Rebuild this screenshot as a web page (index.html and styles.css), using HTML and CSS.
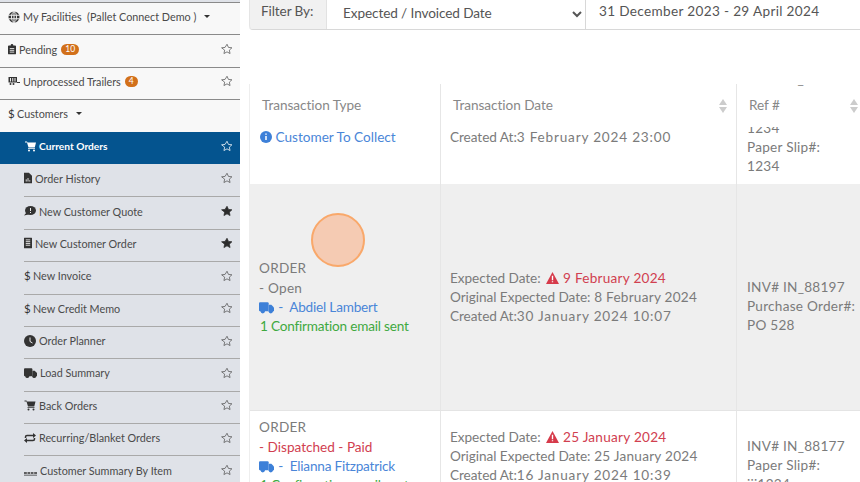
FILE: index.html
```html
<!DOCTYPE html>
<html lang="en">
<head>
<meta charset="utf-8">
<title>Current Orders</title>
<link rel="stylesheet" href="styles.css">
</head>
<body>
<svg class="sprite" aria-hidden="true">
  <symbol id="star" viewBox="0 0 24 24"><path d="M12 2.500l2.900 6.300 6.900.8-5.100 4.700 1.400 6.800-6.100-3.400-6.100 3.400 1.400-6.800L1.200 9.600l6.900-.8z"/></symbol>
  <symbol id="cart" viewBox="0 0 24 24"><path d="M1 3h4l1 2h17l-2.500 10H8L5 5H1z"/><rect x="7" y="16.500" width="14" height="1.500"/><circle cx="9" cy="21" r="2"/><circle cx="19" cy="21" r="2"/></symbol>
  <symbol id="truck" viewBox="0 0 28 24"><rect x="0" y="2" width="18" height="17" rx="2"/><path d="M18 7h5l5 5v7H18z"/><circle cx="7" cy="19" r="4"/><circle cx="22" cy="19" r="4"/></symbol>
</svg>
<div class="app">
  <nav class="side">
    <div class="row top"><svg class="ico" viewBox="0 0 24 24"><circle cx="12" cy="12" r="11"/><path d="M1 8.500h22M1 15.500h22M12 1v22M7 12c0-6 2-9 5-11 3 2 5 5 5 11s-2 9-5 11c-3-2-5-5-5-11z" class="cut"/></svg><span>My Facilities&nbsp; (Pallet Connect Demo )</span><i class="caret"></i></div>
    <div class="row top"><svg class="ico narrow" viewBox="0 0 18 24"><path d="M2 4h4a3 3 0 0 1 6 0h4a2 2 0 0 1 2 2v16a2 2 0 0 1-2 2H2a2 2 0 0 1-2-2V6a2 2 0 0 1 2-2z"/><path class="cut" d="M4 11h10M4 15h10M4 19h10"/></svg><span>Pending</span><b class="badge">10</b><svg class="star"><use href="#star"/></svg></div>
    <div class="row top"><svg class="ico" viewBox="0 0 24 18"><path d="M1 1h17v11H1z"/><path class="cut" d="M5 3v7M9.500 3v7M14 3v7"/><circle cx="5" cy="15" r="2"/><circle cx="11" cy="15" r="2"/><path d="M18 11h6v2h-6z"/></svg><span>Unprocessed Trailers</span><b class="badge">4</b><svg class="star"><use href="#star"/></svg></div>
    <div class="row top"><span class="dollar">$</span><span>Customers</span><i class="caret"></i></div>
    <div class="row active"><svg class="ico"><use href="#cart"/></svg><span>Current Orders</span><svg class="star"><use href="#star"/></svg></div>
    <div class="row sub"><svg class="ico narrow" viewBox="0 0 18 24"><path d="M0 0h11l7 7v17H0z"/><path class="cut" d="M5 20v-5M9 20v-8M13 20v-3"/></svg><span>Order History</span><svg class="star"><use href="#star"/></svg></div>
    <div class="row sub"><svg class="ico" viewBox="0 0 24 20"><ellipse cx="13" cy="9" rx="11" ry="9"/><path d="M5 13L0 19l9-2z"/><path class="cut" d="M13 4v6M13 12v2"/></svg><span>New Customer Quote</span><svg class="star on"><use href="#star"/></svg></div>
    <div class="row sub"><svg class="ico narrow" viewBox="0 0 18 24"><rect width="18" height="24" rx="1"/><path class="cut" d="M4 5h10M4 9h10M4 13h10M4 17h10"/></svg><span>New Customer Order</span><svg class="star on"><use href="#star"/></svg></div>
    <div class="row sub"><span class="dollar">$</span><span>New Invoice</span><svg class="star"><use href="#star"/></svg></div>
    <div class="row sub"><span class="dollar">$</span><span>New Credit Memo</span><svg class="star"><use href="#star"/></svg></div>
    <div class="row sub"><svg class="ico" viewBox="0 0 24 24"><circle cx="12" cy="12" r="12"/><path class="cut" d="M12 5v8l5 3"/></svg><span>Order Planner</span><svg class="star"><use href="#star"/></svg></div>
    <div class="row sub"><svg class="ico wide"><use href="#truck"/></svg><span>Load Summary</span><svg class="star"><use href="#star"/></svg></div>
    <div class="row sub"><svg class="ico"><use href="#cart"/></svg><span>Back Orders</span><svg class="star"><use href="#star"/></svg></div>
    <div class="row sub"><svg class="ico" viewBox="0 0 24 20"><path class="line" d="M3 10V8a3 3 0 0 1 3-3h14M21 10v2a3 3 0 0 1-3 3H4"/><path d="M18 0l6 5-6 5zM6 10l-6 5 6 5z"/></svg><span>Recurring/Blanket Orders</span><svg class="star"><use href="#star"/></svg></div>
    <div class="row sub"><svg class="ico wide" viewBox="0 0 28 24"><path d="M0 17h28v3H0zM0 22h28v2H0z"/><path class="cut" d="M7 17v3M14 17v3M21 17v3"/></svg><span>Customer Summary By Item</span><svg class="star"><use href="#star"/></svg></div>
  </nav>

  <main class="main">
    <div class="filter">
      <div class="filter-label">Filter By:</div>
      <select class="filter-select"><option>Expected / Invoiced Date</option></select>
      <div class="filter-date">31 December 2023 - 29 April 2024</div>
    </div>

    <div class="table">
      <div class="tr head">
        <div class="th">Transaction Type</div>
        <div class="th">Transaction Date<i class="sort"></i></div>
        <div class="th"><div class="clipline"><span>INV# IN_90300</span></div>Ref #<i class="sort"></i></div>
      </div>

      <div class="tr first">
        <div class="td"><div class="link"><svg class="info" viewBox="0 0 24 24"><circle cx="12" cy="12" r="12"/><path class="cut" d="M12 10v8M12 5v2.500"/></svg> Customer To Collect</div></div>
        <div class="td"><span class="lbl">Created At:</span><span class="when">3 February 2024 23:00</span></div>
        <div class="td ref"><div>1234</div><div>Paper Slip#:</div><div>1234</div></div>
      </div>

      <div class="tr grey">
        <div class="td mid"><div class="kind">ORDER</div><div>- Open</div><div class="link driver"><svg class="tr-ico"><use href="#truck"/></svg> - &nbsp;Abdiel Lambert</div><div class="ok">1 Confirmation email sent</div></div>
        <div class="td mid"><div><span class="lbl">Expected Date:</span> <span class="late"><svg class="warn" viewBox="0 0 24 22"><path d="M12 0l12 22H0z"/><path class="cut" d="M12 7v8M12 17v2"/></svg> 9 February 2024</span></div><div><span class="lbl">Original Expected Date:</span> 8 February 2024</div><div><span class="lbl">Created At:</span><span class="when">30 January 2024 10:07</span></div></div>
        <div class="td mid"><div class="blank"></div><div>INV# IN_88197</div><div>Purchase Order#:</div><div>PO 528</div></div>
      </div>

      <div class="tr last">
        <div class="td mid"><div class="kind">ORDER</div><div class="late status">- Dispatched - Paid</div><div class="link driver"><svg class="tr-ico"><use href="#truck"/></svg> - &nbsp;Elianna Fitzpatrick</div><div class="ok">1 Confirmation email sent</div></div>
        <div class="td mid"><div><span class="lbl">Expected Date:</span> <span class="late"><svg class="warn" viewBox="0 0 24 22"><path d="M12 0l12 22H0z"/><path class="cut" d="M12 7v8M12 17v2"/></svg> 25 January 2024</span></div><div><span class="lbl">Original Expected Date:</span> 25 January 2024</div><div><span class="lbl">Created At:</span><span class="when">16 January 2024 10:39</span></div></div>
        <div class="td mid"><div class="blank"></div><div>INV# IN_88177</div><div>Paper Slip#:</div><div>jjj1234</div></div>
      </div>
    </div>
  </main>
</div>
<div class="click-dot"></div>
</body>
</html>
```
FILE: styles.css
```css
* { box-sizing: border-box; }
html, body { margin: 0; height: 482px; overflow: hidden; background: #fff; }
body { font-family: Lato, "Noto Sans", sans-serif; position: relative; }
.sprite { display: none; }
.app { display: flex; height: 482px; overflow: hidden; }

/* sidebar */
.side { flex: 0 0 240px; height: 482px; padding-top: 2px; background: #dfe2e8; overflow: hidden; }
.row { display: flex; align-items: center; height: 32.4px; padding: 0 7px 4px 0; font-size: 10.8px; color: #4a4a4a; gap: 3px; white-space: nowrap; }
.row.top { background: #f8f8f8; padding-left: 8px; border-top: 1px solid #8a8a8a; }
.row.active { background: #04548f; color: #fff; padding-left: 24px; font-weight: 700; font-size: 10.2px; gap: 2px; }
.row.sub { margin-left: 24px; border-top: 1px solid #a9a9a9; }
.row.active + .row.sub { border-top: 0; }
.ico { width: 12px; height: 12px; flex: none; fill: currentColor; color: #333; }
.active .ico { color: #fff; width: 13px; }
.ico.narrow { width: 8px; }
.ico.wide { width: 13px; }
.ico .cut { fill: none; stroke: #eee; stroke-width: 2; }
.ico .line { fill: none; stroke: currentColor; stroke-width: 3; }
.dollar { color: #333; font-size: 11.500px; width: 6px; }
.caret { width: 0; height: 0; border: 3px solid transparent; border-top-color: #333; border-bottom: 0; margin-left: 5px; }
.badge { background: #d2701a; color: #fff; border-radius: 8px; padding: 0 4px; font-size: 8.500px; line-height: 11px; height: 11px; font-weight: 400; margin-left: 1px; }
.star { width: 12px; height: 12px; margin-left: auto; flex: none; fill: none; stroke: #555; stroke-width: 1.500; }
.star.on { fill: #2c2c2c; stroke: #2c2c2c; }
.active .star { stroke: #fff; }

/* main */
.main { flex: 1; min-width: 0; padding-left: 9px; height: 482px; overflow: hidden; color: #7b7b7b; font-size: 13.6px; letter-spacing: .25px; }
.filter { display: flex; height: 30px; border-bottom: 1px solid #d8d8d8; border-bottom-left-radius: 4px; color: #555; }
.filter-label { flex: 0 0 78px; background: #f1f1f1; padding: 3px 0 0 11px; letter-spacing: -.1px; border-right: 1px solid #e2e2e2; border-bottom-left-radius: 4px; border-left: 1px solid #e5e5e5; }
.filter-select { flex: 0 0 259px; border: 0; border-right: 1px solid #d8d8d8; background: #fff; font: inherit; letter-spacing: -.1px; color: #555; padding: 0 0 3px 12px; height: 29px; }
.filter-date { flex: 1; padding: 3px 0 0 13px; letter-spacing: .33px; }

.table { margin-top: 54px; border-left: 1px solid #eee; }
.tr { display: grid; grid-template-columns: 191px 296px 124px; }
.td, .th { border-right: 1px solid #e6e6e6; padding: 0 9px; line-height: 19px; min-width: 0; white-space: nowrap; overflow: hidden; }
.th { position: relative; height: 43px; padding: 12px 12px 0; color: #888; letter-spacing: -.05px; }
.td:nth-child(3) { padding-left: 10px; }
.clipline { position: absolute; left: 12px; top: 0; height: 2px; overflow: hidden; display: flex; align-items: flex-end; }
.clipline span { line-height: 14px; flex: none; }
.sort { position: absolute; right: 9px; top: 15px; width: 0; height: 0; border: 4px solid transparent; border-bottom: 6px solid #ccc; border-top: 0; }
.sort::after { content: ""; position: absolute; left: -4px; top: 8px; border: 4px solid transparent; border-top: 6px solid #ccc; border-bottom: 0; }
.th:nth-child(3) .sort { right: 2px; }
.first { height: 57px; }
.first .td { padding-top: 1px; }
.first .td.ref { padding-top: 0; display: flex; flex-direction: column; justify-content: flex-end; padding-bottom: 8px; }
.first .td.ref > div { flex: none; }
.first .td:first-child { padding-left: 10px; }
.grey { background: #efefef; height: 227px; border-bottom: 1px solid #e4e4e4; }
.last { height: 90px; }
.mid { display: flex; flex-direction: column; justify-content: center; }
.td.mid > * { flex: none; }
.kind { margin-bottom: 1px; }
.blank { height: 19px; }
.lbl { letter-spacing: -.05px; }
.when { letter-spacing: .8px; }
.link { color: #4a86d8; letter-spacing: 0; }
.link.driver { letter-spacing: -.2px; }
.ok { color: #3fa93f; letter-spacing: -.2px; padding-left: 1px; }
.late { color: #d14050; }
.late.status { letter-spacing: 0; }
.info { width: 12px; height: 12px; fill: #3d80d8; vertical-align: -1px; }
.info .cut { fill: none; stroke: #fff; stroke-width: 3; }
.tr-ico { width: 15px; height: 13px; margin-right: 1px; fill: #3d80d8; vertical-align: -2px; }
.warn { width: 13px; height: 12px; margin-left: 2px; fill: #d63a4a; vertical-align: -1px; }
.warn .cut { fill: none; stroke: #fff; stroke-width: 2.500; }

.click-dot { position: absolute; left: 311px; top: 213px; width: 54px; height: 54px; border-radius: 50%; background: rgba(255, 150, 90, .4); border: 2px solid #f9a86a; }
```
